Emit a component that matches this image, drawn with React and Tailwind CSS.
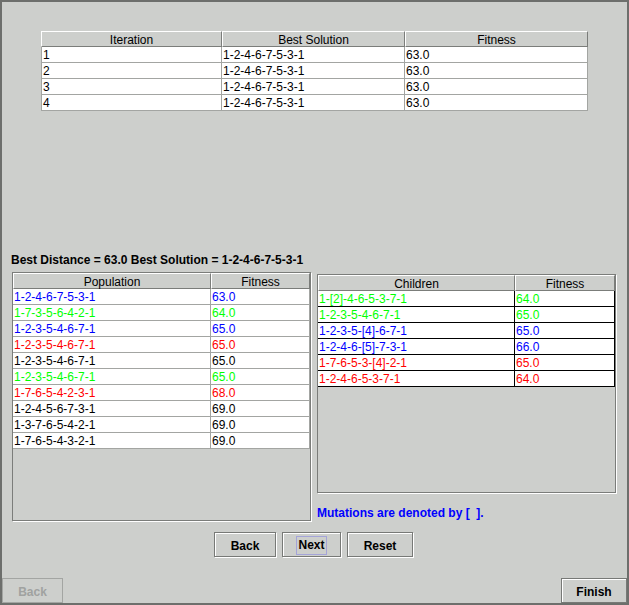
import React from 'react';

// colores de linha, iguais aos do Swing (Color.blue, Color.green...)
const COR = {
  azul: 'text-[#0000ff]',
  verde: 'text-[#00ff00]',
  vermelho: 'text-[#ff0000]',
  preto: 'text-black',
};

const iteracoes = [
  ['1', '1-2-4-6-7-5-3-1', '63.0'],
  ['2', '1-2-4-6-7-5-3-1', '63.0'],
  ['3', '1-2-4-6-7-5-3-1', '63.0'],
  ['4', '1-2-4-6-7-5-3-1', '63.0'],
];

const populacao = [
  ['1-2-4-6-7-5-3-1', '63.0', 'azul'],
  ['1-7-3-5-6-4-2-1', '64.0', 'verde'],
  ['1-2-3-5-4-6-7-1', '65.0', 'azul'],
  ['1-2-3-5-4-6-7-1', '65.0', 'vermelho'],
  ['1-2-3-5-4-6-7-1', '65.0', 'preto'],
  ['1-2-3-5-4-6-7-1', '65.0', 'verde'],
  ['1-7-6-5-4-2-3-1', '68.0', 'vermelho'],
  ['1-2-4-5-6-7-3-1', '69.0', 'preto'],
  ['1-3-7-6-5-4-2-1', '69.0', 'preto'],
  ['1-7-6-5-4-3-2-1', '69.0', 'preto'],
];

const filhos = [
  ['1-[2]-4-6-5-3-7-1', '64.0', 'verde'],
  ['1-2-3-5-4-6-7-1', '65.0', 'verde'],
  ['1-2-3-5-[4]-6-7-1', '65.0', 'azul'],
  ['1-2-4-6-[5]-7-3-1', '66.0', 'azul'],
  ['1-7-6-5-3-[4]-2-1', '65.0', 'vermelho'],
  ['1-2-4-6-5-3-7-1', '64.0', 'vermelho'],
];

// cabeçalho com relevo (branco em cima/esquerda, cinza embaixo/direita)
const Cabecalho = ({ largura, children }) => (
  <div
    className={`${largura} h-4 shrink-0 border border-t-white border-l-white border-b-[#7b7d7a] border-r-[#7b7d7a] text-center leading-[16px] text-black`}
  >
    {children}
  </div>
);

const Botao = ({ largura, children }) => (
  <button
    type="button"
    className={`${largura} h-[25px] flex items-center justify-center pt-[3px] border border-[#777976] shadow-[inset_1px_1px_0_#fff,1px_1px_0_#fff] font-bold text-black leading-[14px]`}
  >
    {children}
  </button>
);

export default function App() {
  return (
    <div className="w-[629px] h-[605px] border-2 border-[#6d6f6c] bg-[#cdcfcc] flex flex-col text-[12px] font-['Liberation_Sans',Arial,sans-serif] overflow-hidden">
      {/* TABELA DE ITERAÇÕES */}
      <div className="mt-[29px] ml-[39px] w-[547px]">
        <div className="flex">
          <Cabecalho largura="w-[181px]">Iteration</Cabecalho>
          <Cabecalho largura="w-[183px]">Best Solution</Cabecalho>
          <Cabecalho largura="w-[183px]">Fitness</Cabecalho>
        </div>
        {iteracoes.map(([it, sol, fit]) => (
          <div key={it} className="flex bg-white leading-[15px] text-black">
            <div className="w-[181px] h-4 pl-[1px] pt-[1px] border-l border-r border-b border-[#a3a5a2]">{it}</div>
            <div className="w-[183px] h-4 pl-[1px] pt-[1px] border-r border-b border-[#a3a5a2]">{sol}</div>
            <div className="w-[183px] h-4 pl-[1px] pt-[1px] border-r border-b border-[#a3a5a2]">{fit}</div>
          </div>
        ))}
      </div>

      <div className="mt-[142px] ml-[9px] font-bold leading-[14px] text-black">
        Best Distance = 63.0 Best Solution = 1-2-4-6-7-5-3-1
      </div>

      <div className="mt-[5px] ml-[10px] flex items-start">
        {/* POPULAÇÃO */}
        <div className="w-[299px] h-[249px] border border-[#7b7d7a] shadow-[1px_1px_0_#fff] flex flex-col">
          <div className="flex">
            <Cabecalho largura="w-[198px]">Population</Cabecalho>
            <Cabecalho largura="w-[99px]">Fitness</Cabecalho>
          </div>
          {populacao.map(([rota, fit, cor], i) => (
            <div key={i} className={`flex bg-white leading-[15px] ${COR[cor]}`}>
              <div className="w-[198px] h-4 pl-[1px] pt-[1px] border-r border-b border-[#a3a5a2]">{rota}</div>
              <div className="w-[99px] h-4 pl-[1px] pt-[1px] border-r border-b border-[#a3a5a2]">{fit}</div>
            </div>
          ))}
        </div>

        {/* FILHOS + LEGENDA */}
        <div className="ml-[6px] mt-[2px] flex flex-col">
          <div className="w-[299px] h-[219px] border border-[#7b7d7a] shadow-[1px_1px_0_#fff] flex flex-col">
            <div className="flex">
              <Cabecalho largura="w-[197px]">Children</Cabecalho>
              <Cabecalho largura="w-[100px]">Fitness</Cabecalho>
            </div>
            {filhos.map(([rota, fit, cor], i) => (
              <div key={i} className={`flex bg-white leading-[15px] ${COR[cor]}`}>
                <div className="w-[197px] h-4 pl-[1px] pt-[1px] border-r border-b border-black">{rota}</div>
                <div className="w-[100px] h-4 pl-[1px] pt-[1px] border-r border-b border-black">{fit}</div>
              </div>
            ))}
          </div>
          <div className="mt-[13px] font-bold leading-[14px] text-[#0000ff]">
            Mutations are denoted by [&nbsp;&nbsp;].
          </div>
        </div>
      </div>

      {/* BOTÕES DE NAVEGAÇÃO */}
      <div className="mt-[11px] pl-[212px] flex gap-[6px]">
        <Botao largura="w-[62px]">Back</Botao>
        <Botao largura="w-[59px]">
          <span className="h-[19px] px-[1px] border border-[#a4a4d8] leading-[17px] -mt-[2px]">Next</span>
        </Botao>
        <Botao largura="w-[66px]">Reset</Botao>
      </div>

      <div className="mt-auto flex justify-between">
        <div className="w-[61px] h-[25px] flex items-center justify-center pt-[3px] border border-[#a3a5a2] font-bold text-[#a0a2a0] leading-[14px]">
          Back
        </div>
        <Botao largura="w-[66px]">Finish</Botao>
      </div>
    </div>
  );
}
